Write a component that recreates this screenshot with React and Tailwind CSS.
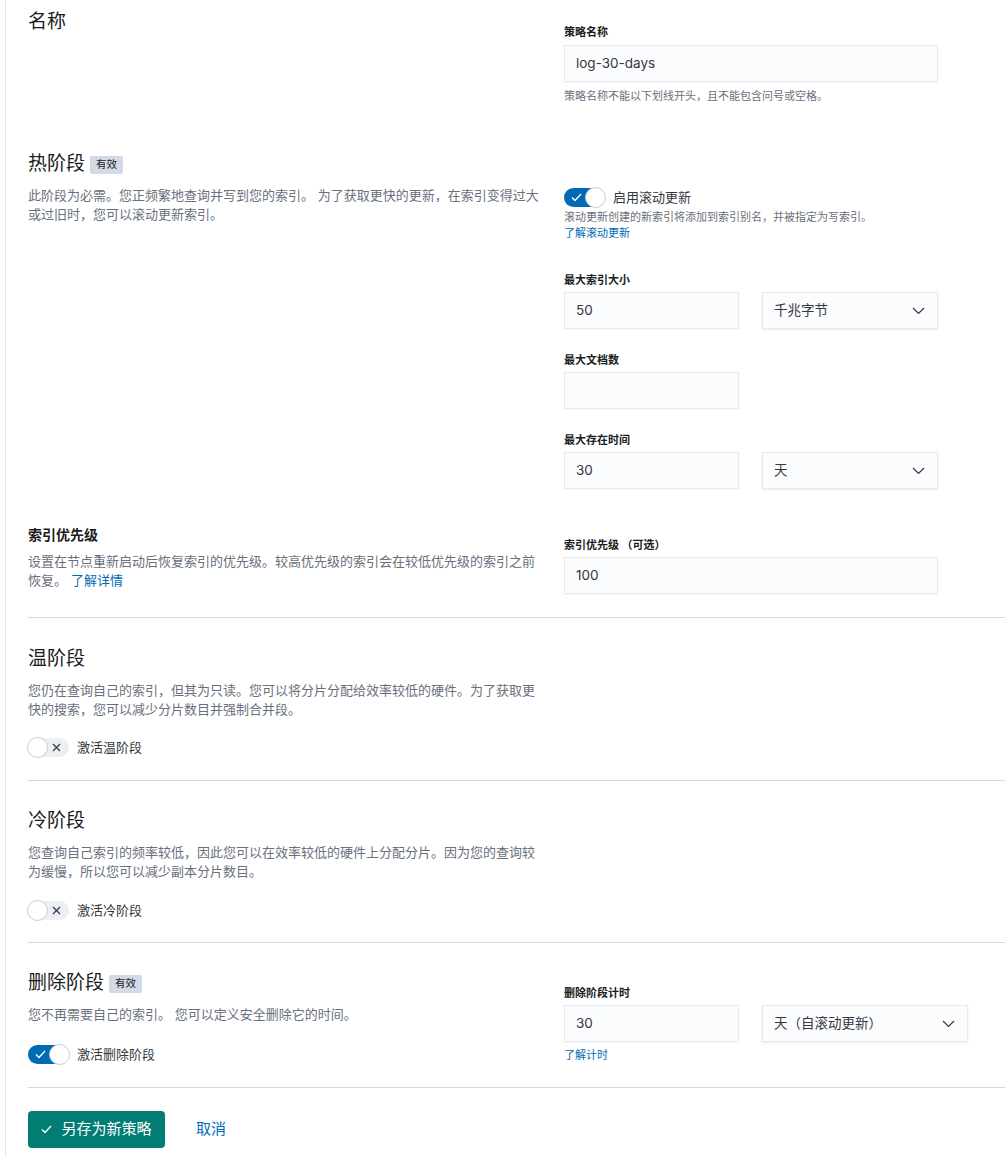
import React from 'react'

const Title = ({ children, badge }) => (
  <div className="flex items-center h-[24px]">
    <span className="text-[19px] leading-[24px] text-[#1a1c21]">{children}</span>
    {badge && (
      <span className="ml-[5px] mt-[1px] inline-flex items-center h-[18px] px-[6px] rounded-[2px] bg-[#d3dae6] text-[10.5px] text-[#1a1c21]">
        {badge}
      </span>
    )}
  </div>
)

const Desc = ({ children }) => (
  <p className="mt-[10px] text-[13px] leading-[19px] text-[#69707d]">{children}</p>
)

const Label = ({ children }) => (
  <div className="text-[11px] leading-[14px] font-bold text-[#1a1c21]">{children}</div>
)

const Help = ({ children, className = '' }) => (
  <div className={`text-[11px] leading-[16px] text-[#69707d] ${className}`}>{children}</div>
)

const Link = ({ children, className = '' }) => (
  <div className={`text-[11px] leading-[16px] text-[#006bb4] ${className}`}>{children}</div>
)

const Input = ({ value, w = 'w-[175px]' }) => (
  <div className={`${w} h-[37px] flex items-center pl-[11px] bg-[#fbfcfd] border border-[#e6e9ee] shadow-[0_1px_1px_rgba(0,0,0,0.04)] text-[13.5px] text-[#343741]`}>
    {value}
  </div>
)

const Select = ({ value, w = 'w-[176px]' }) => (
  <div className={`${w} h-[37px] flex items-center justify-between pl-[11px] pr-[12px] bg-[#fbfcfd] border border-[#e6e9ee] shadow-[0_1px_3px_rgba(0,0,0,0.08)] text-[13.5px] text-[#343741]`}>
    <span>{value}</span>
    <svg width="13" height="8" viewBox="0 0 13 8" fill="none">
      <path d="M1 1l5.5 5.5L12 1" stroke="#343741" strokeWidth="1.2" />
    </svg>
  </div>
)

const Field = ({ label, children, className = '' }) => (
  <div className={className}>
    <Label>{label}</Label>
    <div className="mt-[5px] flex gap-[23px]">{children}</div>
  </div>
)

const Toggle = ({ on, label }) => (
  <div className="flex items-center h-[19px]">
    {on ? (
      <span className="relative inline-block h-[19px] w-[41px] rounded-full bg-[#006bb4]">
        <svg className="absolute left-[7px] top-[5px]" width="11" height="9" viewBox="0 0 11 9" fill="none">
          <path d="M1 4.5l3 3L10 1" stroke="white" strokeWidth="1.3" />
        </svg>
        <span className="absolute right-[-1px] top-[-1px] h-[21px] w-[21px] rounded-full bg-white border border-[#c5cad3]" />
      </span>
    ) : (
      <span className="relative inline-block h-[19px] w-[41px] rounded-full bg-[#eceff4]">
        <svg className="absolute right-[8px] top-[5px]" width="9" height="9" viewBox="0 0 9 9" fill="none">
          <path d="M1 1l7 7M8 1L1 8" stroke="#343741" strokeWidth="1.2" />
        </svg>
        <span className="absolute left-[-1px] top-[-1px] h-[21px] w-[21px] rounded-full bg-white border border-[#c5cad3]" />
      </span>
    )}
    <span className="ml-[8px] text-[13px] text-[#343741]">{label}</span>
  </div>
)

const Divider = ({ className = '' }) => <div className={`h-px bg-[#d3dae6] ${className}`} />

export default function App() {
  return (
    <div className="min-h-screen bg-white font-['Inter','Noto_Sans_CJK_SC',sans-serif]">
      <div className="ml-[5px] min-h-screen border-l border-[#e3e7ed] pl-[22px] pt-[10px] pb-[10px]">
        {/* 名称 */}
        <div className="grid grid-cols-[512px_1fr] gap-x-[24px]">
          <div>
            <Title>名称</Title>
          </div>
          <div className="pt-[15px]">
            <Label>策略名称</Label>
            <div className="mt-[6px]">
              <Input value="log-30-days" w="w-[374px]" />
            </div>
            <Help className="mt-[6px]">策略名称不能以下划线开头，且不能包含问号或空格。</Help>
          </div>
        </div>

        {/* 热阶段 */}
        <div className="mt-[48px] grid grid-cols-[512px_1fr] gap-x-[24px]">
          <div>
            <Title badge="有效">热阶段</Title>
            <Desc>此阶段为必需。您正频繁地查询并写到您的索引。 为了获取更快的更新，在索引变得过大或过旧时，您可以滚动更新索引。</Desc>
          </div>
          <div className="pt-[36px]">
            <Toggle on label="启用滚动更新" />
            <Help className="mt-[2px]">滚动更新创建的新索引将添加到索引别名，并被指定为写索引。</Help>
            <Link>了解滚动更新</Link>
            <Field label="最大索引大小" className="mt-[32px]">
              <Input value="50" />
              <Select value="千兆字节" />
            </Field>
            <Field label="最大文档数" className="mt-[24px]">
              <Input value="" />
            </Field>
            <Field label="最大存在时间" className="mt-[24px]">
              <Input value="30" />
              <Select value="天" />
            </Field>
          </div>
        </div>

        {/* 索引优先级 */}
        <div className="mt-[37px] grid grid-cols-[512px_1fr] gap-x-[24px]">
          <div>
            <div className="text-[14px] leading-[18px] font-bold text-[#1a1c21]">索引优先级</div>
            <div className="mt-[8px] text-[13px] leading-[19px] text-[#69707d]">
              <div>设置在节点重新启动后恢复索引的优先级。较高优先级的索引会在较低优先级的索引之前</div>
              <div className="flex">
                <span>恢复。</span>
                <span className="ml-[4px] text-[#006bb4]">了解详情</span>
              </div>
            </div>
          </div>
          <div className="pt-[12px]">
            <Field label="索引优先级 （可选）">
              <Input value="100" w="w-[374px]" />
            </Field>
          </div>
        </div>

        <Divider className="mt-[23px]" />

        {/* 温阶段 */}
        <div className="pt-[29px] w-[512px]">
          <Title>温阶段</Title>
          <Desc>您仍在查询自己的索引，但其为只读。您可以将分片分配给效率较低的硬件。为了获取更快的搜索，您可以减少分片数目并强制合并段。</Desc>
          <div className="mt-[19px]">
            <Toggle label="激活温阶段" />
          </div>
        </div>

        <Divider className="mt-[23px]" />

        {/* 冷阶段 */}
        <div className="pt-[28px] w-[512px]">
          <Title>冷阶段</Title>
          <Desc>您查询自己索引的频率较低，因此您可以在效率较低的硬件上分配分片。因为您的查询较为缓慢，所以您可以减少副本分片数目。</Desc>
          <div className="mt-[20px]">
            <Toggle label="激活冷阶段" />
          </div>
        </div>

        <Divider className="mt-[22px]" />

        {/* 删除阶段 */}
        <div className="pt-[28px] grid grid-cols-[512px_1fr] gap-x-[24px]">
          <div>
            <Title badge="有效">删除阶段</Title>
            <Desc>您不再需要自己的索引。 您可以定义安全删除它的时间。</Desc>
            <div className="mt-[21px]">
              <Toggle on label="激活删除阶段" />
            </div>
          </div>
          <div className="pt-[15px]">
            <Field label="删除阶段计时">
              <Input value="30" />
              <Select value="天（自滚动更新）" w="w-[206px]" />
            </Field>
            <Link className="mt-[5px]">了解计时</Link>
          </div>
        </div>

        <Divider className="mt-[23px]" />

        <div className="mt-[23px] flex items-center">
          <button className="flex items-center justify-center gap-[9px] w-[137px] h-[37px] rounded-[4px] bg-[#017d73] text-white text-[15px]">
            <svg width="11" height="9" viewBox="0 0 11 9" fill="none">
              <path d="M1 4.5l3 3L10 1" stroke="white" strokeWidth="1.3" />
            </svg>
            <span>另存为新策略</span>
          </button>
          <button className="ml-[31px] text-[15px] text-[#006bb4]">取消</button>
        </div>
      </div>
    </div>
  )
}
